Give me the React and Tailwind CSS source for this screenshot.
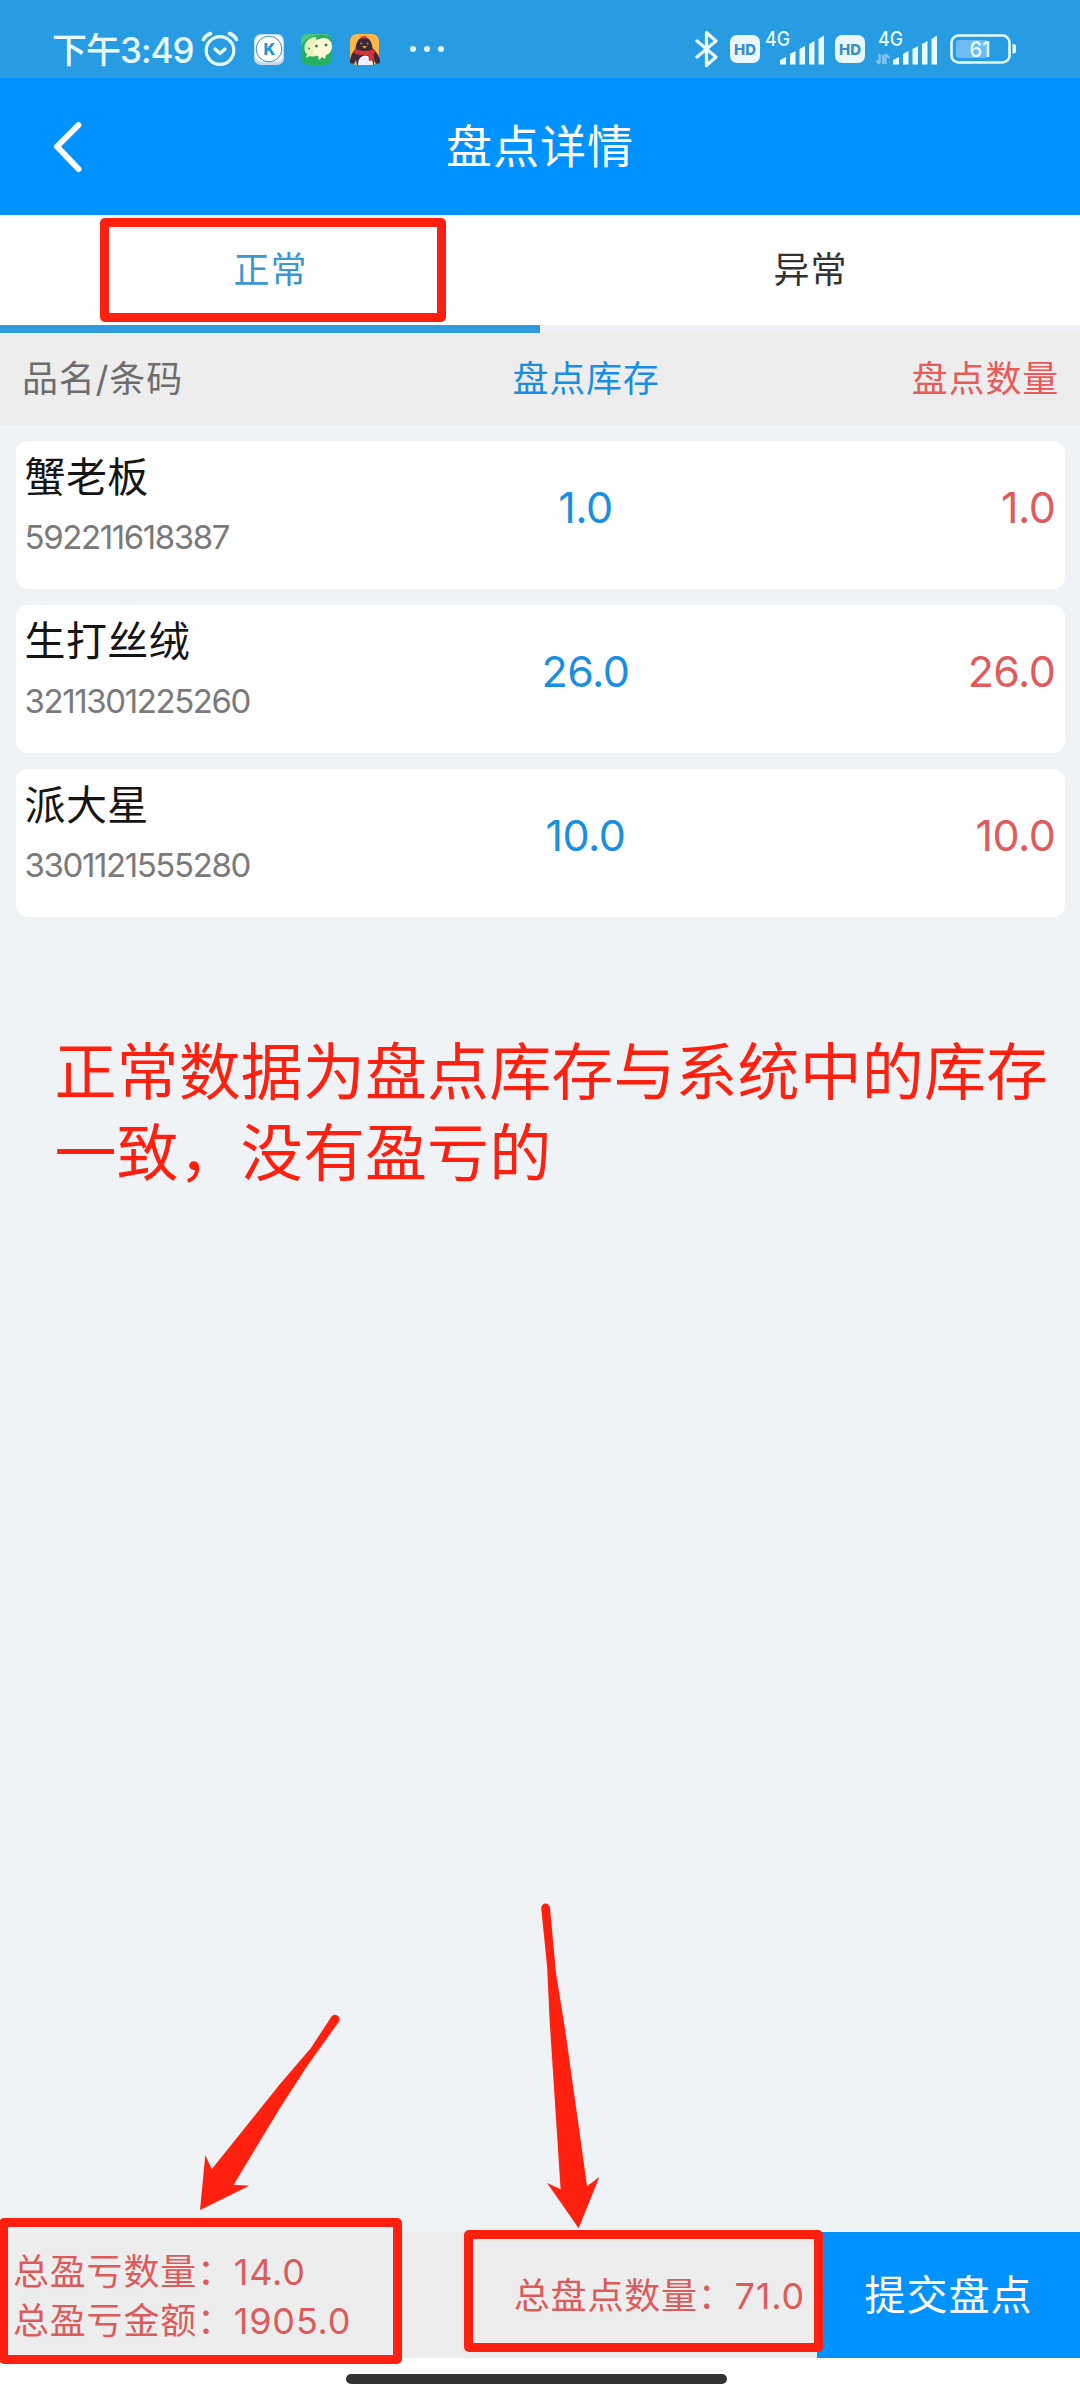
import React, { useState } from 'react';

const items = [
    { name: '蟹老板', barcode: '592211618387', stock: 1, count: 1 },
    { name: '生打丝绒', barcode: '3211301225260', stock: 26, count: 26 },
    { name: '派大星', barcode: '3301121555280', stock: 10, count: 10 },
];

const tabs = [
    { key: 'normal', label: '正常' },
    { key: 'abnormal', label: '异常' },
];

const AlarmIcon = () => (
    <svg width="38" height="36" viewBox="0 0 38 36" fill="none" stroke="#e8fbff" strokeWidth="3.2" strokeLinecap="round">
        <circle cx="19" cy="19.5" r="13.8" />
        <path d="M14 18l5 4.5 5-4.5" strokeLinejoin="round" />
        <path d="M2.5 8.5C4 5.5 6.5 3.5 9.5 2.5M35.5 8.5C34 5.5 31.5 3.5 28.5 2.5" strokeWidth="3.6" />
    </svg>
);

const KIcon = () => (
    <svg width="30" height="31" viewBox="0 0 30 31">
        <rect width="30" height="31" rx="7" fill="#c9dbe7" />
        <rect x="1" y="1" width="28" height="27" rx="7" fill="#f3f9fd" />
        <circle cx="15" cy="15" r="12.8" fill="#fff" stroke="#3f8fb5" strokeWidth="1" />
        <text x="15.3" y="20.5" textAnchor="middle" fontSize="16" fontWeight="800" fill="#1399dd" className="font-['Inter']">K</text>
    </svg>
);

const WechatIcon = () => (
    <svg width="31" height="31" viewBox="0 0 31 31">
        <rect width="31" height="31" rx="7" fill="#25b163" />
        <path d="M0 12C6 1 18 -1 30 3L25 0H7Q0 0 0 7Z" fill="#4cc780" />
        <path d="M3.500 14C3.500 7 9 3 15 3l3 17c-3 3-7 3-9 2l-4 2 1-4c-2-1.500-2.500-3.500-2.500-6z" fill="#e6f3bb" />
        <path d="M12 14c0-6 5-10 11-10 5 0 8 4 8 8 0 4-2 8-6 9l-1 4-3-2-3 3-1-4c-3-1-5-4-5-8z" fill="#fdf8d4" />
        <circle cx="15.500" cy="12" r="1.5" fill="#2b8a4c" />
        <circle cx="25" cy="11" r="1.5" fill="#2b8a4c" />
        <circle cx="8" cy="14.500" r="1" fill="#2b8a4c" />
    </svg>
);

const QQIcon = () => (
    <svg width="32" height="31" viewBox="0 0 32 31">
        <rect x="1" width="29" height="31" rx="7" fill="#fbb847" />
        <path d="M15 3c5 0 8 5 8.500 11 4 4 8 9 7.500 15l-4 1-2-4v5H8l-1-5-2 4-4-1c0-6 2-10 5.500-14C7 8 10 3 15 3z" fill="#3a2a3c" />
        <path d="M9 31c0-6 3-9.500 7.500-9.500S24 25 24 31z" fill="#edf0fb" />
        <path d="M6 15c6 2.500 13 2.500 19 0l1 4c-6 3-15 3-21 0z" fill="#d8313a" />
        <path d="M19 19l5-1 1.500 8-5.500 1z" fill="#d8313a" />
        <path d="M11 4.500l2-2.500 1.500 1L16 1l1 2 2 1.500z" fill="#d8313a" />
        <circle cx="12" cy="9.5" r="1.1" fill="#8f8391" />
        <circle cx="18.500" cy="9.5" r="1.1" fill="#8f8391" />
        <path d="M13 12h5l-2.500 2.500z" fill="#f6a52d" />
    </svg>
);

const BluetoothIcon = () => (
    <svg width="24" height="38" viewBox="0 0 24 38" fill="none" stroke="#e8fbff" strokeWidth="3.2" strokeLinecap="round" strokeLinejoin="round">
        <path d="M2 11l19 16-9.5 8.5V2.5L21 11 2 27" />
    </svg>
);

const HdBadge = () => (
    <div className="w-[30px] h-[28px] rounded-[7px] bg-[#eaf7fe] flex items-center justify-center font-['Inter'] text-[15px] leading-none font-extrabold text-[#3b8fc4]">
        HD
    </div>
);

const Signal = ({ data }) => (
    <svg width="62" height="52" viewBox="0 -8 62 52" fill="#e8fbff">
        <text x="2" y="14.5" fontSize="20" fontWeight="500" textLength="25" lengthAdjust="spacingAndGlyphs" className="font-['Inter']">4G</text>
        {data && (
            <path d="M3.5 23v9M3.5 33l-3-3.5M7 33V24M9.5 33V23M9.5 23l4 4" stroke="#7cc3f1" strokeWidth="2.4" fill="none" />
        )}
        <path d="M17 33.5V29l6-3v7.500zM27 33.5V23l5.500-3v13.500zM36.500 33.5V18l5.500-3v18.500zM46 33.5V13l5.500-3v23.500zM55.500 33.5V8l5.500-3.500v29z" />
    </svg>
);

const BatteryIcon = () => (
    <svg width="67" height="30" viewBox="0 0 67 30">
        <rect x="1.5" y="1.5" width="58" height="27" rx="7" fill="none" stroke="#e8fbff" strokeWidth="2.6" />
        <rect x="6" y="6" width="32" height="18" rx="3" fill="#6cbcf2" />
        <path d="M62.5 10h1q2.500 0 2.500 2.500v4.500q0 2.500-2.500 2.500h-1z" fill="#e8fbff" />
        <text x="30" y="22.5" textAnchor="middle" fontSize="22" fontWeight="500" fill="#e8fbff" textLength="21" lengthAdjust="spacingAndGlyphs" className="font-['Inter']">61</text>
    </svg>
);

const StatusBar = () => (
    <div className="h-[78px] bg-[#289ce3] pt-5 pl-[52px] pr-[63px] flex items-center justify-between text-[#e8fbff]">
        <div className="flex items-center">
            <span className="w-[149px] pt-0.5 text-[35px] leading-none font-medium whitespace-nowrap tracking-[-1px]">下午3:49</span>
            <AlarmIcon />
            <div className="flex items-center gap-[17px] ml-[15px]">
                <KIcon />
                <WechatIcon />
                <QQIcon />
            </div>
            <div className="flex gap-2 ml-[29px]">
                <span className="w-1.5 h-1.5 rounded-full bg-[#e8fbff]"></span>
                <span className="w-1.5 h-1.5 rounded-full bg-[#e8fbff]"></span>
                <span className="w-1.5 h-1.5 rounded-full bg-[#e8fbff]"></span>
            </div>
        </div>
        <div className="flex items-center">
            <BluetoothIcon />
            <div className="flex items-center ml-[11px]">
                <HdBadge />
                <div className="ml-[3px]"><Signal /></div>
            </div>
            <div className="flex items-center ml-[10px]">
                <HdBadge />
                <div className="ml-[11px]"><Signal data /></div>
            </div>
            <div className="ml-[12px]"><BatteryIcon /></div>
        </div>
    </div>
);

const Arrows = () => (
    <svg className="absolute left-0 top-[1880px]" width="1080" height="360" viewBox="0 1880 1080 360" fill="#ff2010">
        <path d="M331.5 2016.5L310.7 2048.3 280 2084 211.7 2169.3 205.3 2155 200 2210 249.3 2185.7 233.7 2184.7 280 2108 306.7 2066.7 339.3 2021A4.6 4.6 0 0 0 331.5 2016.5Z" />
        <path d="M541.2 1908L547.1 1966.7 549.6 2020 560.6 2189.3 547.1 2183 578.7 2228.3 599.3 2177 587.1 2186.3 565.2 2030 556 1973.3 550 1908A4.4 4.4 0 0 0 541.2 1908Z" />
    </svg>
);

const App = () => {
    const [activeTab, setActiveTab] = useState('normal');

    return (
        <div className="relative w-[1080px] h-[2400px] overflow-hidden flex flex-col bg-[#eff3f6] font-['Inter','Noto_Sans_CJK_SC',sans-serif]">
            <StatusBar />

            <div className="h-[137px] bg-[#0092ff] grid grid-cols-3 items-center text-white">
                <svg className="ml-[52px]" width="32" height="54" viewBox="0 0 32 54" fill="none" stroke="#fff" strokeWidth="6" strokeLinecap="round" strokeLinejoin="round">
                    <path d="M26.5 5L5 26.5 26.5 49" />
                </svg>
                <h1 className="pb-0.5 text-[46px] leading-none text-center tracking-[1px]">盘点详情</h1>
            </div>

            <div className="h-[118px] flex">
                {tabs.map(tab => (
                    <button
                        key={tab.key}
                        onClick={() => setActiveTab(tab.key)}
                        className={`flex-1 flex flex-col text-[36px] leading-none tracking-[1px] ${activeTab === tab.key ? 'text-[#3a97d0]' : 'text-[#333]'}`}
                    >
                        <span className="w-full h-[110px] pl-px bg-white flex items-center justify-center">{tab.label}</span>
                        <span className={`w-full h-2 ${activeTab === tab.key ? 'bg-[#2f9ade]' : 'bg-[#f1f2f5]'}`}></span>
                    </button>
                ))}
            </div>

            <div className="h-[92px] bg-[#ededed] pl-[22px] pr-[21px] flex items-center text-[36px] leading-none tracking-[0.8px]">
                <span className="w-[400px] text-[#6d6d6d]">品名/条码</span>
                <span className="w-[328px] text-center text-[#198fe3]">盘点库存</span>
                <span className="flex-1 text-right text-[#e95a5a]">盘点数量</span>
            </div>

            <div className="flex-1 px-[15.5px] pt-4 flex flex-col gap-4">
                {items.map(item => (
                    <div key={item.barcode} className="h-[148px] bg-white rounded-[12px] pl-[9px] pr-[9px] flex">
                        <div className="w-[397px] pt-[15px]">
                            <div className="text-[41px] leading-[42px] tracking-[0.4px] text-[#151515]">{item.name}</div>
                            <div className="mt-[18px] text-[33px] leading-[42px] tracking-[-1.4px] text-[#7a7a7a]">{item.barcode}</div>
                        </div>
                        <div className="w-[328px] h-[132px] flex items-center justify-center text-[43px] tracking-[-0.5px] text-[#198fe3]">{item.stock.toFixed(1)}</div>
                        <div className="flex-1 h-[132px] flex items-center justify-end text-[43px] tracking-[-0.5px] text-[#e05c5c]">{item.count.toFixed(1)}</div>
                    </div>
                ))}
                <p className="mt-[99px] pl-[39px] text-[62px] leading-[81px] tracking-[0.1px] whitespace-nowrap text-[#ff2010]">
                    正常数据为盘点库存与系统中的库存<br />一致，没有盈亏的
                </p>
            </div>

            <div className="h-[126px] bg-[#ededed] flex text-[36px] text-[#dc5c5c] whitespace-nowrap">
                <div className="w-[464px] pl-[13px] pt-[3px] flex flex-col justify-center leading-[49px] tracking-[0.8px]">
                    <div>总盈亏数量：14.0</div>
                    <div>总盈亏金额：1905.0</div>
                </div>
                <div className="w-[353px] pr-[12px] pt-px flex items-center justify-end tracking-[0.8px]">总盘点数量：71.0</div>
                <button className="flex-1 bg-[#0092ff] text-white text-[41px] leading-none tracking-[1px]">提交盘点</button>
            </div>

            <div className="h-[42px] bg-white flex justify-center pt-4">
                <div className="w-[381px] h-[10px] mr-[7px] rounded-full bg-[#333]"></div>
            </div>

            {/* red callouts drawn over the page */}
            <div className="absolute left-[100px] top-[218px] w-[346px] h-[104px] border-[9px] border-[#ff2010] rounded-[5px]"></div>
            <div className="absolute left-[-1px] top-[2218px] w-[403px] h-[146px] border-[9px] border-[#ff2010] rounded-[5px]"></div>
            <div className="absolute left-[464px] top-[2230px] w-[359px] h-[122px] border-[9px] border-[#ff2010] rounded-[5px]"></div>
            <Arrows />
        </div>
    );
};

export default App;
